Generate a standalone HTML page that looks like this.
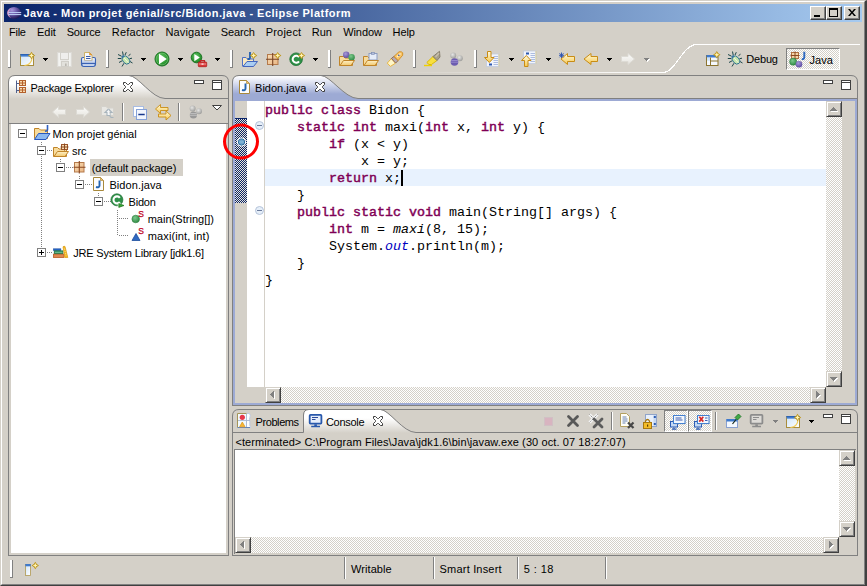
<!DOCTYPE html><html><head><meta charset='utf-8'><title>Java - Mon projet génial/src/Bidon.java - Eclipse Platform</title><style>
*{box-sizing:border-box;margin:0;padding:0}
html,body{width:867px;height:586px;overflow:hidden;background:#d4d0c8}
body{position:relative;font-family:"Liberation Sans",sans-serif;font-size:11px;color:#000;line-height:13px}
.a{position:absolute}
.t{position:absolute;white-space:pre;height:13px;line-height:13px}
.code{position:absolute;white-space:pre;font-family:"Liberation Mono",monospace;font-size:13.33px;line-height:17px;height:17px;left:265px;color:#000}
.k{color:#7f0055;-webkit-text-stroke:0.45px #7f0055}
.f{color:#0000c0;font-style:italic}
.i{font-style:italic}
.chk{background-image:conic-gradient(#fff 25%,#d4d0c8 0 50%,#fff 0 75%,#d4d0c8 0);background-size:2px 2px}
.btn{position:absolute;background:#d4d0c8;border:1px solid;border-color:#fff #404040 #404040 #fff;box-shadow:inset -1px -1px 0 #808080}
.sb{position:absolute;width:16px;height:16px;background:#d4d0c8;border:1px solid;border-color:#d4d0c8 #404040 #404040 #d4d0c8;box-shadow:inset 1px 1px 0 #fff,inset -1px -1px 0 #808080}
.sep{position:absolute;width:2px;border-left:1px solid #808080;border-right:1px solid #fff}
.hnd{position:absolute;width:3px;border-left:1px solid #fff;border-right:1px solid #808080}
.dd{position:absolute;width:0;height:0;border-left:2.5px solid transparent;border-right:2.5px solid transparent;border-top:3px solid #000}
svg{position:absolute;overflow:visible}
</style></head><body>
<div class='a' style='left:0px;top:0px;width:867px;height:586px;border-top:1px solid #d4d0c8;border-left:1px solid #d4d0c8;border-right:2px solid #404040;border-bottom:1px solid #404040'></div>
<div class='a' style='left:1px;top:1px;width:864px;height:584px;border-top:1px solid #fff;border-left:1px solid #fff;border-right:1px solid #808080;border-bottom:1px solid #808080'></div>
<div class='a' style='left:4px;top:4px;width:858px;height:18px;background:linear-gradient(90deg,#0a246a,#a6caf0)'></div>
<svg style="left:6px;top:5px" width="16" height="16" viewBox="0 0 16 16"><defs><radialGradient id="eg" cx="0.35" cy="0.25" r="0.8"><stop offset="0" stop-color="#a898dc"/><stop offset="0.45" stop-color="#6858a8"/><stop offset="1" stop-color="#1c1450"/></radialGradient></defs><ellipse cx="8" cy="8" rx="7" ry="6" fill="url(#eg)"/><clipPath id="ec"><ellipse cx="8" cy="8" rx="7" ry="6"/></clipPath><path d="M5 2.600 Q-3 8 5 13.400 Q0.800 8 5 2.600 Z" fill="#eaa4c6" opacity="0.800" clip-path="url(#ec)"/><rect x="2.200" y="7" width="13" height="1.100" fill="#b8c8f2"/><rect x="2.200" y="9" width="13" height="1.100" fill="#b8c8f2"/></svg>
<div class='t' style='left:23.4px;top:7px;font-weight:bold;letter-spacing:0.485px;color:#fff'>Java - Mon projet génial/src/Bidon.java - Eclipse Platform</div>
<div class='btn' style='left:810px;top:6px;width:16px;height:14px'></div>
<div class='btn' style='left:826px;top:6px;width:16px;height:14px'></div>
<div class='btn' style='left:844px;top:6px;width:16px;height:14px'></div>
<div class='a' style='left:814px;top:15px;width:6px;height:2px;background:#000'></div>
<div class='a' style='left:829px;top:8px;width:9px;height:9px;border:1px solid #000;border-top-width:2px'></div>
<svg style="left:848px;top:9px" width="8" height="7" viewBox="0 0 8 7"><path d="M0 0h2l2 2.5L6 0h2L5 3.5 8 7H6L4 4.5 2 7H0l3-3.5z" fill="#000"/></svg>
<div class='t' style='left:9.0px;top:26px;letter-spacing:-0.245px;'>File</div>
<div class='t' style='left:37.0px;top:26px;letter-spacing:-0.023px;'>Edit</div>
<div class='t' style='left:66.7px;top:26px;letter-spacing:-0.192px;'>Source</div>
<div class='t' style='left:111.8px;top:26px;letter-spacing:0.175px;'>Refactor</div>
<div class='t' style='left:165.4px;top:26px;letter-spacing:0.168px;'>Navigate</div>
<div class='t' style='left:220.8px;top:26px;letter-spacing:-0.132px;'>Search</div>
<div class='t' style='left:265.7px;top:26px;letter-spacing:0.208px;'>Project</div>
<div class='t' style='left:311.7px;top:26px;letter-spacing:0.006px;'>Run</div>
<div class='t' style='left:343.2px;top:26px;letter-spacing:-0.085px;'>Window</div>
<div class='t' style='left:392.6px;top:26px;letter-spacing:-0.108px;'>Help</div>
<svg width="0" height="0" style="position:absolute"><defs>
<linearGradient id="gwin" x1="0" y1="0" x2="1" y2="1"><stop offset="0" stop-color="#cfe4f8"/><stop offset="1" stop-color="#ffffff"/></linearGradient>
<linearGradient id="gprn" x1="0" y1="0" x2="0" y2="1"><stop offset="0" stop-color="#f0f4fc"/><stop offset="1" stop-color="#9fb6e0"/></linearGradient>
<radialGradient id="grun" cx="0.45" cy="0.4" r="0.6"><stop offset="0" stop-color="#6cc86c"/><stop offset="0.7" stop-color="#2f9a34"/><stop offset="1" stop-color="#1f7a28"/></radialGradient>
<linearGradient id="gfold" x1="0" y1="0" x2="0" y2="1"><stop offset="0" stop-color="#fdf0c8"/><stop offset="1" stop-color="#f2c86c"/></linearGradient>
<linearGradient id="garr" x1="0" y1="0" x2="0" y2="1"><stop offset="0" stop-color="#fffbe0"/><stop offset="1" stop-color="#f6c850"/></linearGradient>
<linearGradient id="gdis" x1="0" y1="0" x2="0" y2="1"><stop offset="0" stop-color="#fbfbfa"/><stop offset="1" stop-color="#e6e4de"/></linearGradient>
<radialGradient id="gpur" cx="0.4" cy="0.35" r="0.7"><stop offset="0" stop-color="#a89ad8"/><stop offset="1" stop-color="#5a48a0"/></radialGradient>
<radialGradient id="ggrn" cx="0.4" cy="0.35" r="0.7"><stop offset="0" stop-color="#7cc88c"/><stop offset="1" stop-color="#2c8840"/></radialGradient>
<radialGradient id="ggry" cx="0.4" cy="0.35" r="0.7"><stop offset="0" stop-color="#e6e6e4"/><stop offset="1" stop-color="#9a9a98"/></radialGradient>
<linearGradient id="gpk" x1="0" y1="0" x2="1" y2="1"><stop offset="0" stop-color="#f8dcb4"/><stop offset="1" stop-color="#eab684"/></linearGradient>
</defs></svg>
<div class='a' style='left:8px;top:50px;width:3px;height:18px;background:#fff;border-right:1px solid #808080;border-bottom:1px solid #808080'></div>
<svg style='left:20px;top:51px' width='16' height='16' viewBox='0 0 16 16'><rect x="0.5" y="3.5" width="13" height="11" fill="url(#gwin)" stroke="#a98d3c"/><rect x="0.5" y="3" width="13" height="2.6" fill="#3f7acc"/><rect x="0.5" y="3" width="13" height="1" fill="#2c62b4"/><path d="M12 7 Q11.5 13.5 4.5 14.5" fill="none" stroke="#f2cc58" stroke-width="1.2"/><path d="M11.5 0.7999999999999998 L13.0 3.0 L15.2 4.5 L13.0 6.0 L11.5 8.2 L10.0 6.0 L7.8 4.5 L10.0 3.0 Z" fill="#bf971c"/><path d="M11.5 2.0 L12.25 3.75 L14.0 4.5 L12.25 5.25 L11.5 7.0 L10.75 5.25 L9.0 4.5 L10.75 3.75 Z" fill="#fff4b4"/></svg>
<div class='a' style='left:43px;top:58px;width:5px;height:1px;background:#000'></div>
<div class='a' style='left:44px;top:59px;width:3px;height:1px;background:#000'></div>
<div class='a' style='left:45px;top:60px;width:1px;height:1px;background:#000'></div>
<svg style='left:57px;top:51px' width='16' height='16' viewBox='0 0 16 16'><rect x="0.5" y="1.5" width="14" height="14" fill="#e9e8e5" stroke="#dcdad5"/><rect x="1.5" y="2" width="2" height="13" fill="#f3f3f1"/><rect x="11.5" y="2" width="2" height="13" fill="#f3f3f1"/><rect x="3.5" y="1.5" width="8" height="7" fill="#efeeec" stroke="#d3d1cb"/><rect x="4.5" y="10.5" width="7" height="5" fill="#e2e1dc" stroke="#d0cec8"/><rect x="8" y="12.5" width="1.6" height="2.5" fill="#b9b7b0"/></svg>
<svg style='left:81px;top:51px' width='16' height='16' viewBox='0 0 16 16'><path d="M2 6.500 Q0.500 6.500 0.500 8 V13 Q0.500 15.500 3 15.500 H12 Q14.500 15.500 14.500 13 V8 Q14.500 6.500 13 6.500 Z" fill="url(#gprn)" stroke="#3a62b4" stroke-width="1.100"/><path d="M1 12.500 H14" stroke="#3a62b4" stroke-width="1.300"/><path d="M2 14 H13" stroke="#e4ecfa" stroke-width="1"/><path d="M3.500 9.500 V1.500 H8.500 L11 4 V9.500 Z" fill="#f4f7fd" stroke="#c9aa58" stroke-width="0.900"/><path d="M8.500 1.500 V4 H11 Z" fill="#f0a030" stroke="#d89030" stroke-width="0.600"/><path d="M5 5.500 H9.500 M5 7.500 H9.500" stroke="#3c5ca8" stroke-width="1.100"/><path d="M3 9.800 H11.500" stroke="#b4c4e4" stroke-width="0.800"/></svg>
<div class='a' style='left:106px;top:50px;width:3px;height:18px;background:#fff;border-right:1px solid #808080;border-bottom:1px solid #808080'></div>
<svg style='left:117px;top:51px' width='16' height='16' viewBox='0 0 16 16'><g stroke="#1c4648" stroke-width="1" fill="none"><path d="M5.500 0.500 L6.200 4 M9.300 1.200 L8 4 M1 3.500 L4.500 5.200 M0.800 7.500 H4.300 M2 11.500 L5.300 9.700 M5 15.500 L7 12.200 M11.500 4.700 L13.500 3.200 M12.500 7.700 L15 7.200 M13 10.500 L15.500 12"/></g><g transform="rotate(-42 8.500 8.500)"><ellipse cx="8.500" cy="9.200" rx="3.200" ry="4.500" fill="#c6e4ae" stroke="#2a7090" stroke-width="0.900"/><path d="M8.500 5.500 V13" stroke="#ecf8e0" stroke-width="0.900"/><ellipse cx="8.500" cy="4.600" rx="1.700" ry="1.200" fill="#3a78a0"/></g></svg>
<div class='a' style='left:141px;top:58px;width:5px;height:1px;background:#000'></div>
<div class='a' style='left:142px;top:59px;width:3px;height:1px;background:#000'></div>
<div class='a' style='left:143px;top:60px;width:1px;height:1px;background:#000'></div>
<svg style='left:154px;top:51px' width='16' height='16' viewBox='0 0 16 16'><circle cx="8" cy="8" r="7" fill="url(#grun)" stroke="#1d7424" stroke-width="1"/><circle cx="8" cy="8" r="5.800" fill="none" stroke="#7ccc7c" stroke-width="0.800" opacity="0.700"/><path d="M5 2.800 L12.800 8 L5 13.200 Z" fill="#fff"/></svg>
<div class='a' style='left:178px;top:58px;width:5px;height:1px;background:#000'></div>
<div class='a' style='left:179px;top:59px;width:3px;height:1px;background:#000'></div>
<div class='a' style='left:180px;top:60px;width:1px;height:1px;background:#000'></div>
<svg style='left:191px;top:51px' width='16' height='16' viewBox='0 0 16 16'><circle cx="5.500" cy="6.500" r="5.300" fill="url(#grun)" stroke="#1d7424"/><path d="M3.300 3 L8.800 6.500 L3.300 10.300 Z" fill="#fff"/><path d="M9.500 11 V9.600 H13.500 V11" fill="none" stroke="#c02828" stroke-width="1.200"/><rect x="7.300" y="11" width="8.400" height="4.700" rx="0.800" fill="#d83838" stroke="#b02020" stroke-width="0.800"/><path d="M7.800 13 H15.200" stroke="#f4b0b0" stroke-width="0.800"/><rect x="10.500" y="12.300" width="2" height="1.600" fill="#f8d0d0"/></svg>
<div class='a' style='left:215px;top:58px;width:5px;height:1px;background:#000'></div>
<div class='a' style='left:216px;top:59px;width:3px;height:1px;background:#000'></div>
<div class='a' style='left:217px;top:60px;width:1px;height:1px;background:#000'></div>
<div class='a' style='left:230px;top:50px;width:3px;height:18px;background:#fff;border-right:1px solid #808080;border-bottom:1px solid #808080'></div>
<svg style='left:242px;top:51px' width='16' height='16' viewBox='0 0 16 16'><path d="M0.500 6.500 H4 L5.500 8 H11.500 V15 H0.500 Z" fill="#fbe9c0" stroke="#5070c4"/><path d="M1 15.500 L5 10.500 H15.500 L11.500 15.500 Z" fill="#a9cdf2" stroke="#4464bc"/><path d="M8 1 V6.500 Q8 8.500 5.500 8" fill="none" stroke="#1f5cb0" stroke-width="1.800"/><path d="M11.6 0.8999999999999995 L13.1 3.0999999999999996 L15.3 4.6 L13.1 6.1 L11.6 8.3 L10.1 6.1 L7.8999999999999995 4.6 L10.1 3.0999999999999996 Z" fill="#bf971c"/><path d="M11.6 2.0999999999999996 L12.35 3.8499999999999996 L14.1 4.6 L12.35 5.35 L11.6 7.1 L10.85 5.35 L9.1 4.6 L10.85 3.8499999999999996 Z" fill="#fff4b4"/></svg>
<svg style='left:266px;top:51px' width='16' height='16' viewBox='0 0 16 16'><rect x="1.500" y="3.500" width="10.500" height="10" fill="url(#gpk)" stroke="#b47a4c"/><path d="M6.700 2 V15 M0 8.300 H13" stroke="#7a4424" stroke-width="1.100"/><path d="M11.7 0.8999999999999995 L13.2 3.0999999999999996 L15.399999999999999 4.6 L13.2 6.1 L11.7 8.3 L10.2 6.1 L7.999999999999999 4.6 L10.2 3.0999999999999996 Z" fill="#bf971c"/><path d="M11.7 2.0999999999999996 L12.45 3.8499999999999996 L14.2 4.6 L12.45 5.35 L11.7 7.1 L10.95 5.35 L9.2 4.6 L10.95 3.8499999999999996 Z" fill="#fff4b4"/></svg>
<svg style='left:289px;top:51px' width='16' height='16' viewBox='0 0 16 16'><circle cx="7.100" cy="8.200" r="6.300" fill="#2e9048" stroke="#1e7034" stroke-width="0.800"/><path d="M10 6.200 A3.500 3.500 0 1 0 10 10.300" fill="none" stroke="#fff" stroke-width="2"/><path d="M12.5 0.8999999999999995 L14.0 3.0999999999999996 L16.2 4.6 L14.0 6.1 L12.5 8.3 L11.0 6.1 L8.8 4.6 L11.0 3.0999999999999996 Z" fill="#bf971c"/><path d="M12.5 2.0999999999999996 L13.25 3.8499999999999996 L15.0 4.6 L13.25 5.35 L12.5 7.1 L11.75 5.35 L10.0 4.6 L11.75 3.8499999999999996 Z" fill="#fff4b4"/></svg>
<div class='a' style='left:313px;top:58px;width:5px;height:1px;background:#000'></div>
<div class='a' style='left:314px;top:59px;width:3px;height:1px;background:#000'></div>
<div class='a' style='left:315px;top:60px;width:1px;height:1px;background:#000'></div>
<div class='a' style='left:328px;top:50px;width:3px;height:18px;background:#fff;border-right:1px solid #808080;border-bottom:1px solid #808080'></div>
<svg style='left:339px;top:51px' width='16' height='16' viewBox='0 0 16 16'><path d="M0.500 5.500 H4.500 L6 7 H13.500 V14.500 H0.500 Z" fill="#f8dc9c" stroke="#c08428"/><circle cx="7.200" cy="3.800" r="3.200" fill="url(#gpur)"/><circle cx="12.600" cy="6.200" r="3.200" fill="url(#ggrn)"/><path d="M1 14.500 L4.500 9.500 H15.500 L12 14.500 Z" fill="url(#gfold)" stroke="#c08428"/></svg>
<svg style='left:363px;top:51px' width='16' height='16' viewBox='0 0 16 16'><path d="M0.500 5.500 H4.500 L6 7 H13.500 V14.500 H0.500 Z" fill="#f8dc9c" stroke="#c08428"/><rect x="6" y="2.500" width="8" height="6.500" fill="#e6ecf8" stroke="#8c9cc0"/><rect x="8.500" y="1.300" width="3" height="2" fill="#b4c0dc" stroke="#7888b0" stroke-width="0.600"/><path d="M1 14.500 L4.500 9.500 H15.500 L12 14.500 Z" fill="url(#gfold)" stroke="#c08428"/></svg>
<svg style='left:387px;top:51px' width='16' height='16' viewBox='0 0 16 16'><path d="M0.300 12.100 L3.400 15.400 L8.600 12.100 L4.400 7.500 Z" fill="#fff6c8" stroke="#e8b030" stroke-width="0.900"/><path d="M4.400 7.500 L8.600 12.100 L11.200 9.500 L7 5.400 Z" fill="#b4aab4" stroke="#8a6040" stroke-width="0.900"/><path d="M7 5.400 L11.200 9.500 L15.700 4.200 L15.700 1.800 L14.300 0.800 L12 0.800 Z" fill="#f8c468" stroke="#d08c20" stroke-width="0.900"/><path d="M10 6 L13.500 2.500" stroke="#fff0c8" stroke-width="1.300"/><circle cx="11.800" cy="4.200" r="0.750" fill="#2040a0"/></svg>
<div class='a' style='left:413px;top:50px;width:3px;height:18px;background:#fff;border-right:1px solid #808080;border-bottom:1px solid #808080'></div>
<svg style='left:424px;top:51px' width='16' height='16' viewBox='0 0 16 16'><path d="M0 14.500 H8" stroke="#f0d000" stroke-width="1.400"/><path d="M5 13.500 L2.800 11.500 L9 5.500 L13 9.500 L7.500 13.500 Z" fill="#f8e040" stroke="#d8b400" stroke-width="0.900"/><path d="M9 5.500 L15.500 0.300 L16 6 L13 9.500 Z" fill="#a8a08c" stroke="#807868" stroke-width="0.900"/><path d="M11.500 6 L15 2" stroke="#c8c0ac" stroke-width="1.300"/></svg>
<svg style='left:448px;top:51px' width='16' height='16' viewBox='0 0 16 16'><circle cx="5.200" cy="4.500" r="3" fill="url(#ggry)"/><circle cx="11.800" cy="7.200" r="3" fill="url(#ggry)"/><circle cx="6.500" cy="11" r="3.800" fill="#6c5cb0"/><path d="M3.200 9.500 H9.800 M2.800 11.200 H10.200" stroke="#9a8cd0" stroke-width="0.900"/></svg>
<div class='a' style='left:474px;top:50px;width:3px;height:18px;background:#fff;border-right:1px solid #808080;border-bottom:1px solid #808080'></div>
<svg style='left:484px;top:51px' width='16' height='16' viewBox='0 0 16 16'><rect x="2.5" y="3" width="12.500" height="12.500" fill="#f2f5fc" stroke="#c0cadf" stroke-width="0.800"/><path d="M15.0 3 V15.5" stroke="#dccf98" stroke-width="1"/><path d="M9.5 5.5 h4.500 M9.5 7.5 h4.500 M9.5 9.5 h4.500 M9.5 11.5 h4.500 M9.5 13.5 h4.500" stroke="#a4b6dc" stroke-width="0.900"/><rect x="5.0" y="12.5" width="3" height="2" fill="#2c58b0"/><path d="M3.500 0.500 H7 V6.500 H10 L5.300 11.500 L0.500 6.500 H3.500 Z" fill="url(#garr)" stroke="#c88c14"/></svg>
<div class='a' style='left:509px;top:58px;width:5px;height:1px;background:#000'></div>
<div class='a' style='left:510px;top:59px;width:3px;height:1px;background:#000'></div>
<div class='a' style='left:511px;top:60px;width:1px;height:1px;background:#000'></div>
<svg style='left:521px;top:51px' width='16' height='16' viewBox='0 0 16 16'><rect x="2.5" y="0" width="12.500" height="12.500" fill="#f2f5fc" stroke="#c0cadf" stroke-width="0.800"/><path d="M15.0 0 V12.5" stroke="#dccf98" stroke-width="1"/><path d="M9.5 2.5 h4.500 M9.5 4.5 h4.500 M9.5 6.5 h4.500 M9.5 8.5 h4.500 M9.5 10.5 h4.500" stroke="#a4b6dc" stroke-width="0.900"/><rect x="5.0" y="1.5" width="3" height="2" fill="#2c58b0"/><path d="M3.500 15.500 H7 V9.500 H10 L5.300 4.500 L0.500 9.500 H3.500 Z" fill="url(#garr)" stroke="#c88c14"/></svg>
<div class='a' style='left:546px;top:58px;width:5px;height:1px;background:#000'></div>
<div class='a' style='left:547px;top:59px;width:3px;height:1px;background:#000'></div>
<div class='a' style='left:548px;top:60px;width:1px;height:1px;background:#000'></div>
<svg style='left:559px;top:51px' width='16' height='16' viewBox='0 0 16 16'><path d="M15.500 5.500 H8.500 V2.500 L2 8 L8.500 13.500 V10.500 H15.500 Z" fill="url(#garr)" stroke="#c88c14"/><path d="M0.500 2.300 L4.500 6.300 M4.500 2.300 L0.500 6.300 M2.500 1.500 V7 M0 4.300 H5" stroke="#2850b0" stroke-width="0.900"/></svg>
<svg style='left:583px;top:51px' width='16' height='16' viewBox='0 0 16 16'><path d="M14.500 5.500 H8 V2.500 L1 8 L8 13.500 V10.500 H14.500 Z" fill="url(#garr)" stroke="#c88c14"/></svg>
<div class='a' style='left:607px;top:58px;width:5px;height:1px;background:#000'></div>
<div class='a' style='left:608px;top:59px;width:3px;height:1px;background:#000'></div>
<div class='a' style='left:609px;top:60px;width:1px;height:1px;background:#000'></div>
<svg style='left:620px;top:51px' width='16' height='16' viewBox='0 0 16 16'><path d="M1.500 5.500 H8 V2.500 L14.500 8 L8 13.500 V10.500 H1.500 Z" fill="url(#gdis)" stroke="#dddbd5"/></svg>
<div class='a' style='left:645px;top:59px;width:5px;height:1px;background:#fff'></div>
<div class='a' style='left:646px;top:60px;width:3px;height:1px;background:#fff'></div>
<div class='a' style='left:647px;top:61px;width:1px;height:1px;background:#fff'></div>
<div class='a' style='left:644px;top:58px;width:5px;height:1px;background:#808080'></div>
<div class='a' style='left:645px;top:59px;width:3px;height:1px;background:#808080'></div>
<div class='a' style='left:646px;top:60px;width:1px;height:1px;background:#808080'></div>
<svg style="left:0;top:0" width="867" height="90" viewBox="0 0 867 90"><defs><linearGradient id="pg" x1="400" x2="660" y1="0" y2="0" gradientUnits="userSpaceOnUse"><stop offset="0" stop-color="#fff" stop-opacity="0"/><stop offset="1" stop-color="#fff"/></linearGradient></defs>
<rect x="400" y="72" width="263" height="1" fill="url(#pg)"/>
<path d="M663 72.5 C676 72.5 682 44.5 697 44.5 L860 44.5" fill="none" stroke="#fff" stroke-width="1.15" shape-rendering="crispEdges"/></svg>
<svg style='left:705px;top:51px' width='16' height='16' viewBox='0 0 16 16'><rect x="1.500" y="4.500" width="11.500" height="10" fill="#f4f8fe" stroke="#8c7430"/><rect x="1.500" y="4" width="11.500" height="2.500" fill="#3f7acc"/><path d="M5.500 6.500 V14.500 M5.500 10 H13" stroke="#8c7430"/><rect x="2" y="6.700" width="3" height="3" fill="#cfe4f8"/><path d="M11.8 0.09999999999999964 L13.3 2.3 L15.5 3.8 L13.3 5.3 L11.8 7.5 L10.3 5.3 L8.100000000000001 3.8 L10.3 2.3 Z" fill="#bf971c"/><path d="M11.8 1.2999999999999998 L12.55 3.05 L14.3 3.8 L12.55 4.55 L11.8 6.3 L11.05 4.55 L9.3 3.8 L11.05 3.05 Z" fill="#fff4b4"/></svg>
<svg style='left:727px;top:51px' width='16' height='16' viewBox='0 0 16 16'><g stroke="#1c4648" stroke-width="1" fill="none"><path d="M5.500 0.500 L6.200 4 M9.300 1.200 L8 4 M1 3.500 L4.500 5.200 M0.800 7.500 H4.300 M2 11.500 L5.300 9.700 M5 15.500 L7 12.200 M11.500 4.700 L13.500 3.200 M12.500 7.700 L15 7.200 M13 10.500 L15.500 12"/></g><g transform="rotate(-42 8.500 8.500)"><ellipse cx="8.500" cy="9.200" rx="3.200" ry="4.500" fill="#c6e4ae" stroke="#2a7090" stroke-width="0.900"/><path d="M8.500 5.500 V13" stroke="#ecf8e0" stroke-width="0.900"/><ellipse cx="8.500" cy="4.600" rx="1.700" ry="1.200" fill="#3a78a0"/></g></svg>
<div class='t' style='left:746.2px;top:53px;letter-spacing:-0.155px;'>Debug</div>
<div class='a' style='left:786px;top:48px;width:54px;height:22px;border:1px solid;border-color:#808080 #fff #fff #808080'></div>
<div class='a chk' style='left:787px;top:49px;width:52px;height:20px'></div>
<svg style='left:789px;top:51px' width='16' height='16' viewBox='0 0 16 16'><rect x="2.500" y="1.500" width="7" height="6" fill="#f4d4a8" stroke="#b07040"/><path d="M6 0.500 V8.500 M1.500 4.500 H10.500" stroke="#8a4820" stroke-width="1"/><path d="M15.300 0.800 V6 Q15.300 8.500 12.800 8" fill="none" stroke="#2c68c0" stroke-width="1.900"/><circle cx="4.200" cy="10.700" r="3.600" fill="url(#ggrn)" stroke="#2c7c3c" stroke-width="0.500"/><circle cx="10" cy="13.200" r="3.300" fill="url(#gpur)"/></svg>
<div class='t' style='left:809.4px;top:54px;letter-spacing:0.117px;'>Java</div>
<svg style="left:0;top:0" width="867" height="586" viewBox="0 0 867 586">
<defs><linearGradient id="tabw" x1="0" x2="0" y1="76" y2="99" gradientUnits="userSpaceOnUse"><stop offset="0" stop-color="#fff"/><stop offset="0.35" stop-color="#fff"/><stop offset="1" stop-color="#d4d0c8"/></linearGradient>
<linearGradient id="tabb" x1="0" x2="0" y1="76" y2="99" gradientUnits="userSpaceOnUse"><stop offset="0" stop-color="#fff"/><stop offset="0.08" stop-color="#f6f7fc"/><stop offset="0.78" stop-color="#9daad4"/><stop offset="1" stop-color="#9daad4"/></linearGradient>
<linearGradient id="tabc" x1="0" x2="0" y1="410" y2="433" gradientUnits="userSpaceOnUse"><stop offset="0" stop-color="#fff"/><stop offset="0.35" stop-color="#fff"/><stop offset="1" stop-color="#d4d0c8"/></linearGradient></defs>
<!-- package explorer -->
<path d="M9 99 V81 Q9 76 14 76 H129 C138 76 152 98.5 165 98.5 V99 Z" fill="url(#tabw)"/>
<path d="M8.5 556 V82 Q8.5 75.5 15 75.5 H222 Q228.5 75.5 228.5 82 V556" fill="none" stroke="#808080"/>
<path d="M129 75.5 C138 75.5 152 98.5 165 98.5 H228" fill="none" stroke="#808080"/>
<!-- editor -->
<path d="M233 99 V81 Q233 76 238 76 H321 C330 76 345 98.5 358 98.5 V99 Z" fill="url(#tabb)"/>
<path d="M232.5 100 V82 Q232.5 75.5 239 75.5 H851 Q857.5 75.5 857.5 82 V100" fill="none" stroke="#808080"/>
<path d="M321 75.5 C330 75.5 345 98.5 358 98.5 H857" fill="none" stroke="#808080"/>
<!-- console -->
<path d="M304 433 V415 Q304 410 309 410 H380.500 C389 410 403 432.5 416 432.5 V433 Z" fill="url(#tabc)"/>
<path d="M232.5 556 V416 Q232.5 409.5 239 409.5 H851 Q857.5 409.5 857.5 416 V556" fill="none" stroke="#808080"/>
<path d="M233 432.5 H303.5 V415 Q303.5 409.5 309 409.5 H380.500 C389 409.5 403 432.5 416 432.5 H857" fill="none" stroke="#808080"/>
</svg>
<div class='a' style='left:8px;top:555px;width:221px;height:1px;background:#808080'></div>
<div class='a' style='left:232px;top:555px;width:626px;height:1px;background:#808080'></div>
<svg style='left:13px;top:79px' width='16' height='16' viewBox='0 0 16 16'><path d="M3.500 1.500 V14 M3.500 4.500 H6 M3.500 11.500 H6" stroke="#50608c" fill="none"/><rect x="6.500" y="1.500" width="6" height="5" fill="#f8dcb0" stroke="#b4602c"/><path d="M9.500 1.500 V6.500 M6.500 4 H12.500" stroke="#b4602c"/><rect x="6.500" y="8.500" width="6" height="5" fill="#f8dcb0" stroke="#b4602c"/><path d="M9.500 8.500 V13.500 M6.500 11 H12.500" stroke="#b4602c"/></svg>
<div class='t' style='left:30.4px;top:82px;letter-spacing:-0.222px;'>Package Explorer</div>
<svg style='left:123px;top:82px' width='10' height='10' viewBox='0 0 10 10'><polygon points='0.5,0.5 2.5,0.5 4.5,2.5 5.5,2.5 7.5,0.5 9.5,0.5 9.5,2.5 7.5,4.5 7.5,5.5 9.5,7.5 9.5,9.5 7.5,9.5 5.5,7.5 4.5,7.5 2.5,9.5 0.5,9.5 0.5,7.5 2.5,5.5 2.5,4.5 0.5,2.5' fill='#fff' stroke='#3c3c3c' stroke-width='1'/></svg>
<div class='a' style='left:194px;top:80px;width:10px;height:4px;border:1px solid #404040;background:#fff'></div>
<div class='a' style='left:212px;top:80px;width:10px;height:10px;border:1px solid #404040;background:#fff'></div>
<div class='a' style='left:213px;top:82px;width:8px;height:1px;background:#404040'></div>
<svg style='left:51px;top:104px' width='16' height='16' viewBox='0 0 16 16'><path d="M14.500 5.500 H7.500 V2.500 L1.500 8 L7.500 13.500 V10.500 H14.500 Z" fill="url(#gdis)" stroke="#dcdad4"/></svg>
<svg style='left:75px;top:104px' width='16' height='16' viewBox='0 0 16 16'><path d="M1.500 5.500 H8.500 V2.500 L14.500 8 L8.500 13.500 V10.500 H1.500 Z" fill="url(#gdis)" stroke="#dcdad4"/></svg>
<svg style='left:99px;top:104px' width='16' height='16' viewBox='0 0 16 16'><path d="M2.500 2.500 H7 L8.500 4 H14.500 V11.500 H2.500 Z" fill="#e8e7e3" stroke="#d4d2cc"/><path d="M9.500 5 L13 8.500 H11 V12 Q11 13.500 13.500 13.500 H14.500" fill="none" stroke="#a8b4bc" stroke-width="1.100"/><path d="M9.500 5 L6 8.500 H8 V11.500 H11" fill="#f4f6f8" stroke="#a8b4bc" stroke-width="1.100"/></svg>
<div class='a' style='left:122px;top:103px;width:2px;height:18px;border-left:1px solid #808080;border-right:1px solid #fff'></div>
<svg style='left:132px;top:104px' width='16' height='16' viewBox='0 0 16 16'><rect x="1.500" y="2.500" width="10" height="10" fill="#fff" stroke="#a8bce2"/><rect x="4.500" y="5.500" width="10" height="10" fill="#f2f6fd" stroke="#86a2d8"/><path d="M6.300 10.500 H12.700" stroke="#18388c" stroke-width="1.500"/></svg>
<svg style='left:155px;top:104px' width='16' height='16' viewBox='0 0 16 16'><path d="M0.500 5 L5.500 0.500 V3.500 H13 V6.500 H5.500 V9.500 Z" fill="url(#garr)" stroke="#c88c14" stroke-width="0.900"/><path d="M16 11.500 L11 7 V10 H3.500 V13 H11 V16 Z" fill="url(#garr)" stroke="#c88c14" stroke-width="0.900"/></svg>
<div class='a' style='left:178px;top:103px;width:2px;height:18px;border-left:1px solid #808080;border-right:1px solid #fff'></div>
<svg style='left:188px;top:104px' width='16' height='16' viewBox='0 0 16 16'><circle cx="4.600" cy="4.600" r="3" fill="url(#ggry)"/><circle cx="11" cy="7.200" r="3" fill="url(#ggry)"/><circle cx="5.400" cy="11" r="3.600" fill="#989898"/><path d="M2.200 9.600 H8.600 M1.900 11.300 H8.900" stroke="#c4c4c4" stroke-width="0.900"/></svg>
<svg style="left:212px;top:105px" width="10" height="6" viewBox="0 0 10 6"><path d="M0.5 0.5 H9.5 L5 5 Z" fill="#fff" stroke="#404040"/></svg>
<div class='a' style='left:9px;top:123px;width:219px;height:1px;background:#808080'></div>
<div class='a' style='left:11px;top:124px;width:215px;height:429px;background:#fff'></div>
<div class='a' style='left:41px;top:142px;width:1px;height:107px;background-image:linear-gradient(#808080 50%,transparent 0);background-size:1px 2px'></div>
<div class='a' style='left:60px;top:159px;width:1px;height:4px;background-image:linear-gradient(#808080 50%,transparent 0);background-size:1px 2px'></div>
<div class='a' style='left:79px;top:176px;width:1px;height:4px;background-image:linear-gradient(#808080 50%,transparent 0);background-size:1px 2px'></div>
<div class='a' style='left:98px;top:193px;width:1px;height:4px;background-image:linear-gradient(#808080 50%,transparent 0);background-size:1px 2px'></div>
<div class='a' style='left:117px;top:210px;width:1px;height:26px;background-image:linear-gradient(#808080 50%,transparent 0);background-size:1px 2px'></div>
<div class='a' style='left:47px;top:150px;width:6px;height:1px;background-image:linear-gradient(90deg,#808080 50%,transparent 0);background-size:2px 1px'></div>
<div class='a' style='left:66px;top:167px;width:7px;height:1px;background-image:linear-gradient(90deg,#808080 50%,transparent 0);background-size:2px 1px'></div>
<div class='a' style='left:85px;top:184px;width:7px;height:1px;background-image:linear-gradient(90deg,#808080 50%,transparent 0);background-size:2px 1px'></div>
<div class='a' style='left:104px;top:201px;width:7px;height:1px;background-image:linear-gradient(90deg,#808080 50%,transparent 0);background-size:2px 1px'></div>
<div class='a' style='left:119px;top:218px;width:10px;height:1px;background-image:linear-gradient(90deg,#808080 50%,transparent 0);background-size:2px 1px'></div>
<div class='a' style='left:119px;top:235px;width:10px;height:1px;background-image:linear-gradient(90deg,#808080 50%,transparent 0);background-size:2px 1px'></div>
<div class='a' style='left:47px;top:252px;width:6px;height:1px;background-image:linear-gradient(90deg,#808080 50%,transparent 0);background-size:2px 1px'></div>
<div class='a' style='left:18px;top:129px;width:9px;height:9px;border:1px solid #808080;background:#fff'></div>
<div class='a' style='left:20px;top:133px;width:5px;height:1px;background:#000'></div>
<div class='a' style='left:37px;top:146px;width:9px;height:9px;border:1px solid #808080;background:#fff'></div>
<div class='a' style='left:39px;top:150px;width:5px;height:1px;background:#000'></div>
<div class='a' style='left:56px;top:163px;width:9px;height:9px;border:1px solid #808080;background:#fff'></div>
<div class='a' style='left:58px;top:167px;width:5px;height:1px;background:#000'></div>
<div class='a' style='left:75px;top:180px;width:9px;height:9px;border:1px solid #808080;background:#fff'></div>
<div class='a' style='left:77px;top:184px;width:5px;height:1px;background:#000'></div>
<div class='a' style='left:94px;top:197px;width:9px;height:9px;border:1px solid #808080;background:#fff'></div>
<div class='a' style='left:96px;top:201px;width:5px;height:1px;background:#000'></div>
<div class='a' style='left:37px;top:248px;width:9px;height:9px;border:1px solid #808080;background:#fff'></div>
<div class='a' style='left:39px;top:252px;width:5px;height:1px;background:#000'></div>
<div class='a' style='left:41px;top:250px;width:1px;height:5px;background:#000'></div>
<svg style='left:34px;top:125px' width='16' height='16' viewBox='0 0 16 16'><path d="M0.500 3.500 H5 L6.500 5 H13.500 V13.500 H0.500 Z" fill="#f8dc9c" stroke="#c08428"/><path d="M0.500 14.500 L4.500 8.500 H16 L12 14.500 Z" fill="#8cb8f0" stroke="#2858c0"/><path d="M13.500 0 V4.500 Q13.500 6.500 11 6" fill="none" stroke="#3060c0" stroke-width="1.600"/></svg>
<div class='t' style='left:52.4px;top:128px;letter-spacing:-0.006px;'>Mon projet génial</div>
<svg style='left:53px;top:142px' width='16' height='16' viewBox='0 0 16 16'><path d="M0.500 5.500 H4.500 L6 7 H13.500 V14.500 H0.500 Z" fill="#f8dc9c" stroke="#c08428"/><rect x="8.500" y="2.500" width="6" height="5" fill="#f8dcb0" stroke="#9c5428"/><path d="M11.500 1.500 V8.500 M7.500 5 H15.500" stroke="#8a4820"/><path d="M1 14.500 L4.500 9.500 H15.500 L12 14.500 Z" fill="url(#gfold)" stroke="#c08428"/></svg>
<div class='t' style='left:72.1px;top:145px;letter-spacing:-0.086px;'>src</div>
<svg style='left:73px;top:159px' width='16' height='16' viewBox='0 0 16 16'><rect x="1.500" y="3.500" width="9.500" height="9.500" fill="url(#gpk)" stroke="#b47a4c"/><path d="M6.300 2 V14.500 M0.500 8.300 H12.500" stroke="#8a4820" stroke-width="1.100"/></svg>
<div class='a' style='left:90px;top:159px;width:93px;height:17px;background:#d4d0c8'></div>
<div class='t' style='left:91.7px;top:162px;letter-spacing:-0.019px;'>(default package)</div>
<svg style='left:92px;top:176px' width='16' height='16' viewBox='0 0 16 16'><path d="M1.500 1.500 H8.500 L11.500 4.500 V14.500 H1.500 Z" fill="#fcfdff" stroke="#a8893c"/><path d="M8.500 1.500 V4.500 H11.500 Z" fill="#e8c070" stroke="#b89040" stroke-width="0.700"/><path d="M7.500 4.500 V9.500 Q7.500 12 4 11" fill="none" stroke="#2464b0" stroke-width="1.900"/></svg>
<div class='t' style='left:109.4px;top:179px;letter-spacing:0.092px;'>Bidon.java</div>
<svg style='left:111px;top:193px' width='16' height='16' viewBox='0 0 16 16'><circle cx="5.900" cy="6.800" r="6" fill="#2e9048" stroke="#1e7034" stroke-width="0.700"/><path d="M8.800 4.800 A3.500 3.500 0 1 0 8.800 9" fill="none" stroke="#fff" stroke-width="2.100"/><path d="M6.800 9.300 L14.500 12.500 L6.800 15.500 Z" fill="#fff"/><path d="M7.800 10.600 L13 12.500 L7.800 14.400 Z" fill="#38a838" stroke="#187018" stroke-width="0.700"/></svg>
<div class='t' style='left:128.6px;top:196px;letter-spacing:-0.210px;'>Bidon</div>
<svg style='left:130px;top:210px' width='16' height='16' viewBox='0 0 16 16'><circle cx="5.700" cy="9" r="3.800" fill="url(#ggrn)" stroke="#2c7c3c" stroke-width="0.600"/><text x="8.200" y="6.800" font-family="Liberation Sans,sans-serif" font-size="8.500" fill="#c00020" stroke="#c00020" stroke-width="0.250">S</text></svg>
<div class='t' style='left:147.7px;top:213px;letter-spacing:0.021px;'>main(String[])</div>
<svg style='left:130px;top:227px' width='16' height='16' viewBox='0 0 16 16'><path d="M6 6.500 L10 13.500 H2 Z" fill="#3068c0" stroke="#1c4c9c" stroke-width="0.800"/><text x="8.200" y="6.800" font-family="Liberation Sans,sans-serif" font-size="8.500" fill="#c00020" stroke="#c00020" stroke-width="0.250">S</text></svg>
<div class='t' style='left:147.7px;top:230px;letter-spacing:0.138px;'>maxi(int, int)</div>
<svg style='left:53px;top:244px' width='16' height='16' viewBox='0 0 16 16'><rect x="0.300" y="4.800" width="7.600" height="1.800" fill="#2464c4" stroke="#1c4ca0" stroke-width="0.500"/><rect x="1.200" y="6.800" width="8.800" height="3.200" fill="#2c8c5c" stroke="#1c6c40" stroke-width="0.600"/><path d="M2 8.300 H9.500" stroke="#7cc8a0" stroke-width="0.900"/><rect x="0.400" y="10.200" width="10.600" height="3.300" fill="#e08850" stroke="#b85c24" stroke-width="0.800"/><path d="M10 2.800 Q11 1.800 12 2.500 L14.800 13.500 H11.800 Z" fill="#f4b820" stroke="#d89810" stroke-width="0.700"/><path d="M11.300 4.500 L13.200 12" stroke="#fce080" stroke-width="1" stroke-dasharray="1.200 1.200"/></svg>
<div class='t' style='left:73.2px;top:247px;letter-spacing:-0.185px;'>JRE System Library [jdk1.6]</div>
<svg style='left:238px;top:79px' width='16' height='16' viewBox='0 0 16 16'><path d="M1.500 1.500 H8.500 L11.500 4.500 V14.500 H1.500 Z" fill="#fcfdff" stroke="#a8893c"/><path d="M8.500 1.500 V4.500 H11.500 Z" fill="#e8c070" stroke="#b89040" stroke-width="0.700"/><path d="M7.500 4.500 V9.500 Q7.500 12 4 11" fill="none" stroke="#2464b0" stroke-width="1.900"/></svg>
<div class='t' style='left:255.1px;top:82px;letter-spacing:-0.008px;'>Bidon.java</div>
<svg style='left:315px;top:82px' width='10' height='10' viewBox='0 0 10 10'><polygon points='0.5,0.5 2.5,0.5 4.5,2.5 5.5,2.5 7.5,0.5 9.5,0.5 9.5,2.5 7.5,4.5 7.5,5.5 9.5,7.5 9.5,9.5 7.5,9.5 5.5,7.5 4.5,7.5 2.5,9.5 0.5,9.5 0.5,7.5 2.5,5.5 2.5,4.5 0.5,2.5' fill='#fff' stroke='#3c3c3c' stroke-width='1'/></svg>
<div class='a' style='left:823px;top:80px;width:10px;height:4px;border:1px solid #404040;background:#fff'></div>
<div class='a' style='left:841px;top:80px;width:10px;height:10px;border:1px solid #404040;background:#fff'></div>
<div class='a' style='left:842px;top:82px;width:8px;height:1px;background:#404040'></div>
<div class='a' style='left:232px;top:99px;width:626px;height:307px;background:#9daad4;border:1px solid #808080;border-top:0'></div>
<div class='a' style='left:235px;top:101px;width:620px;height:302px;background:#d4d0c8'></div>
<div class='a' style='left:247px;top:101px;width:579px;height:286px;background:#fff'></div>
<div class='a' style='left:264px;top:101px;width:1px;height:286px;background:#d4d0c8'></div>
<div class='a' style='left:235px;top:118px;width:12px;height:85px;background-image:conic-gradient(#0a246a 25%,#ebe7d8 0 50%,#0a246a 0 75%,#ebe7d8 0);background-size:2px 2px;border-top:1px solid #0a246a'></div>
<div class='a' style='left:265px;top:169px;width:561px;height:17px;background:#e8f2fe'></div>
<div class='code' style='top:102px'><span class='k'>public</span> <span class='k'>class</span> Bidon {</div>
<div class='code' style='top:119px'>    <span class='k'>static</span> <span class='k'>int</span> maxi(<span class='k'>int</span> x, <span class='k'>int</span> y) {</div>
<div class='code' style='top:136px'>        <span class='k'>if</span> (x &lt; y)</div>
<div class='code' style='top:153px'>            x = y;</div>
<div class='code' style='top:170px'>        <span class='k'>return</span> x;</div>
<div class='code' style='top:187px'>    }</div>
<div class='code' style='top:204px'>    <span class='k'>public</span> <span class='k'>static</span> <span class='k'>void</span> main(String[] args) {</div>
<div class='code' style='top:221px'>        <span class='k'>int</span> m = <span class='i'>maxi</span>(8, 15);</div>
<div class='code' style='top:238px'>        System.<span class='f'>out</span>.println(m);</div>
<div class='code' style='top:255px'>    }</div>
<div class='code' style='top:272px'>}</div>
<div class='a' style='left:401px;top:170px;width:2px;height:16px;background:#000'></div>
<svg style='left:255px;top:121px' width='9' height='9' viewBox='0 0 9 9'><circle cx='4.5' cy='4.5' r='4' fill='#e6eff9' stroke='#b6c4da'/><rect x='2' y='4' width='5' height='1' fill='#6c7c9c'/></svg>
<svg style='left:255px;top:206px' width='9' height='9' viewBox='0 0 9 9'><circle cx='4.5' cy='4.5' r='4' fill='#e6eff9' stroke='#b6c4da'/><rect x='2' y='4' width='5' height='1' fill='#6c7c9c'/></svg>
<svg style='left:236px;top:137px' width='10' height='10' viewBox='0 0 10 10'><circle cx='5.5' cy='5' r='4.6' fill='#fff'/><circle cx='5.5' cy='5' r='3.2' fill='#6ea6cc' stroke='#2e6a9c'/><rect x='3.5' y='4.5' width='4' height='1' fill='#8fc0e0'/></svg>
<svg style='left:215px;top:116px' width='52' height='52' viewBox='0 0 52 52'><path d='M8 25.6 a18 18 0 1 0 36 0 a18 18 0 1 0 -36 0 Z M11 25.6 a15 15 0 1 1 30 0 a15 15 0 1 1 -30 0 Z' fill='#f00' fill-rule='evenodd'/></svg>
<div class='a chk' style='left:826px;top:101px;width:16px;height:286px'></div>
<div class='sb' style='left:826px;top:101px'></div>
<div class='a' style='left:834px;top:108px;width:1px;height:1px;background:#fff'></div>
<div class='a' style='left:833px;top:109px;width:3px;height:1px;background:#fff'></div>
<div class='a' style='left:832px;top:110px;width:5px;height:1px;background:#fff'></div>
<div class='a' style='left:831px;top:111px;width:7px;height:1px;background:#fff'></div>
<div class='a' style='left:833px;top:107px;width:1px;height:1px;background:#808080'></div>
<div class='a' style='left:832px;top:108px;width:3px;height:1px;background:#808080'></div>
<div class='a' style='left:831px;top:109px;width:5px;height:1px;background:#808080'></div>
<div class='a' style='left:830px;top:110px;width:7px;height:1px;background:#808080'></div>
<div class='sb' style='left:826px;top:371px'></div>
<div class='a' style='left:831px;top:378px;width:7px;height:1px;background:#fff'></div>
<div class='a' style='left:832px;top:379px;width:5px;height:1px;background:#fff'></div>
<div class='a' style='left:833px;top:380px;width:3px;height:1px;background:#fff'></div>
<div class='a' style='left:834px;top:381px;width:1px;height:1px;background:#fff'></div>
<div class='a' style='left:830px;top:377px;width:7px;height:1px;background:#808080'></div>
<div class='a' style='left:831px;top:378px;width:5px;height:1px;background:#808080'></div>
<div class='a' style='left:832px;top:379px;width:3px;height:1px;background:#808080'></div>
<div class='a' style='left:833px;top:380px;width:1px;height:1px;background:#808080'></div>
<div class='a chk' style='left:265px;top:387px;width:561px;height:16px'></div>
<div class='sb' style='left:265px;top:387px'></div>
<div class='a' style='left:274px;top:392px;width:1px;height:7px;background:#fff'></div>
<div class='a' style='left:273px;top:393px;width:1px;height:5px;background:#fff'></div>
<div class='a' style='left:272px;top:394px;width:1px;height:3px;background:#fff'></div>
<div class='a' style='left:271px;top:395px;width:1px;height:1px;background:#fff'></div>
<div class='a' style='left:273px;top:391px;width:1px;height:7px;background:#808080'></div>
<div class='a' style='left:272px;top:392px;width:1px;height:5px;background:#808080'></div>
<div class='a' style='left:271px;top:393px;width:1px;height:3px;background:#808080'></div>
<div class='a' style='left:270px;top:394px;width:1px;height:1px;background:#808080'></div>
<div class='sb' style='left:810px;top:387px'></div>
<div class='a' style='left:817px;top:392px;width:1px;height:7px;background:#fff'></div>
<div class='a' style='left:818px;top:393px;width:1px;height:5px;background:#fff'></div>
<div class='a' style='left:819px;top:394px;width:1px;height:3px;background:#fff'></div>
<div class='a' style='left:820px;top:395px;width:1px;height:1px;background:#fff'></div>
<div class='a' style='left:816px;top:391px;width:1px;height:7px;background:#808080'></div>
<div class='a' style='left:817px;top:392px;width:1px;height:5px;background:#808080'></div>
<div class='a' style='left:818px;top:393px;width:1px;height:3px;background:#808080'></div>
<div class='a' style='left:819px;top:394px;width:1px;height:1px;background:#808080'></div>
<div class='a' style='left:826px;top:387px;width:16px;height:16px;background:#d4d0c8'></div>
<svg style='left:237px;top:413px' width='16' height='16' viewBox='0 0 16 16'><path d="M9.500 0.500 H12.500 Q13.800 2.500 12.800 4.500 Q12 6.500 12.800 8 V12.500 Q13.500 13.500 13.500 14.500 H9.500 Z" fill="#fdfeff" stroke="#b4c4e4" stroke-width="0.800"/><rect x="0.500" y="0.500" width="9" height="14" fill="#f2fafe"/><path d="M0.500 14.500 V0.500 H9.500" fill="none" stroke="#a49458"/><path d="M0.500 14.500 H13" fill="none" stroke="#6484b8"/><path d="M1 7.500 H13 M9.500 1 V14" stroke="#a8b8d4" stroke-width="0.900"/><circle cx="5.300" cy="4.300" r="2.600" fill="#e8384c"/><path d="M5.300 9 L8 13.800 H2.600 Z" fill="#f6b838" stroke="#e09820" stroke-width="0.800"/></svg>
<div class='t' style='left:255.5px;top:416px;letter-spacing:-0.410px;'>Problems</div>
<svg style='left:308px;top:413px' width='16' height='16' viewBox='0 0 16 16'><rect x="1.700" y="1.900" width="11.700" height="8.700" rx="0.800" fill="#e6eefb" stroke="#2858ac" stroke-width="1.800"/><path d="M4 4.500 H10 M4 6.500 H7.500" stroke="#2c4c9c" stroke-width="1"/><path d="M3.200 13.500 H12" stroke="#2858ac" stroke-width="1.500"/><path d="M7.600 11.300 V13" stroke="#2858ac" stroke-width="2.600"/></svg>
<div class='t' style='left:325.9px;top:416px;letter-spacing:-0.277px;'>Console</div>
<svg style='left:373px;top:416px' width='10' height='10' viewBox='0 0 10 10'><polygon points='0.5,0.5 2.5,0.5 4.5,2.5 5.5,2.5 7.5,0.5 9.5,0.5 9.5,2.5 7.5,4.5 7.5,5.5 9.5,7.5 9.5,9.5 7.5,9.5 5.5,7.5 4.5,7.5 2.5,9.5 0.5,9.5 0.5,7.5 2.5,5.5 2.5,4.5 0.5,2.5' fill='#fff' stroke='#3c3c3c' stroke-width='1'/></svg>
<div class='a' style='left:823px;top:414px;width:10px;height:4px;border:1px solid #404040;background:#fff'></div>
<div class='a' style='left:841px;top:414px;width:10px;height:10px;border:1px solid #404040;background:#fff'></div>
<div class='a' style='left:842px;top:416px;width:8px;height:1px;background:#404040'></div>
<svg style='left:540px;top:413px' width='16' height='16' viewBox='0 0 16 16'><rect x="4.500" y="4.500" width="8" height="8" fill="#d8b4c0" stroke="#d0c0c4"/></svg>
<svg style='left:565px;top:413px' width='16' height='16' viewBox='0 0 16 16'><path d="M3.500 3.500 L12.500 12.500 M12.500 3.500 L3.500 12.500" stroke="#585858" stroke-width="2.800" stroke-linecap="round"/></svg>
<svg style='left:588px;top:413px' width='16' height='16' viewBox='0 0 16 16'><path d="M1.500 1.500 L9.500 9.500 M9.500 1.500 L1.500 9.500" stroke="#f4f4f4" stroke-width="3"/><path d="M1.500 1.500 L9.500 9.500 M9.500 1.500 L1.500 9.500" stroke="#808080" stroke-width="1" stroke-dasharray="1.200 1"/><path d="M6 6 L14 14 M14 6 L6 14" stroke="#5c5c5c" stroke-width="2.800" stroke-linecap="round"/></svg>
<div class='a' style='left:611px;top:412px;width:2px;height:18px;border-left:1px solid #808080;border-right:1px solid #fff'></div>
<svg style='left:619px;top:413px' width='16' height='16' viewBox='0 0 16 16'><path d="M1.500 0.500 H7.500 L10.500 3.500 V13.500 H1.500 Z" fill="#fffef6" stroke="#b4a060"/><path d="M3.500 4 H7.500 M3.500 6 H8.500 M3.500 8 H8.500 M3.500 10 H6.500" stroke="#6480b4"/><path d="M9 9.500 L14.500 15 M14.500 9.500 L9 15" stroke="#484848" stroke-width="2.200"/></svg>
<svg style='left:642px;top:413px' width='16' height='16' viewBox='0 0 16 16'><rect x="3.500" y="1.500" width="11" height="12" fill="#e8f0fc" stroke="#90a4c8"/><rect x="11.500" y="2" width="2.500" height="11" fill="#c8d8f0"/><rect x="11.800" y="3" width="2" height="2" fill="#2c5cb4"/><rect x="11.800" y="10" width="2" height="2" fill="#2c5cb4"/><path d="M3.500 10 V8 Q5.500 5 7.500 8 V10" fill="none" stroke="#a87810" stroke-width="1.300"/><rect x="1.500" y="9.500" width="8" height="6" fill="#f4bc28" stroke="#a87810"/><rect x="5" y="11.500" width="1.200" height="2.200" fill="#604000"/></svg>
<div class='a' style='left:664px;top:410px;width:24px;height:22px;border:1px solid;border-color:#808080 #fff #fff #808080'></div>
<div class='a chk' style='left:665px;top:411px;width:22px;height:20px'></div>
<div class='a' style='left:688px;top:410px;width:24px;height:22px;border:1px solid;border-color:#808080 #fff #fff #808080'></div>
<div class='a chk' style='left:689px;top:411px;width:22px;height:20px'></div>
<svg style='left:669px;top:414px' width='16' height='16' viewBox='0 0 16 16'><rect x="1.500" y="7.500" width="7" height="5.500" fill="#c4d8f4" stroke="#2c5cb4"/><path d="M3 15.200 H7.500 M5 13.500 V15" stroke="#2c5cb4" stroke-width="1.200"/><rect x="5.500" y="2.500" width="11" height="8" fill="#a0a0a0" opacity="0.350"/><rect x="4.500" y="1.500" width="11.500" height="8" fill="#f4f8fe" stroke="#4480d0"/><path d="M6.500 4 H12.500 M6.500 6 H13.500" stroke="#3c5cb0" stroke-width="1.100"/></svg>
<svg style='left:693px;top:414px' width='16' height='16' viewBox='0 0 16 16'><rect x="1.500" y="7.500" width="7" height="5.500" fill="#c4d8f4" stroke="#2c5cb4"/><path d="M3 15.200 H7.500 M5 13.500 V15" stroke="#2c5cb4" stroke-width="1.200"/><rect x="5.500" y="2.500" width="11" height="8" fill="#a0a0a0" opacity="0.350"/><rect x="4.500" y="1.500" width="11.500" height="8" fill="#f4f8fe" stroke="#4480d0"/><path d="M6.300 2.800 L10.300 7.600 M10.300 2.800 L6.300 7.600" stroke="#d82828" stroke-width="1.700"/><path d="M12 4 H14.500 M12 6.500 H14.500" stroke="#3c5cb0" stroke-width="1.100"/></svg>
<div class='a' style='left:715px;top:412px;width:2px;height:18px;border-left:1px solid #808080;border-right:1px solid #fff'></div>
<svg style='left:726px;top:413px' width='16' height='16' viewBox='0 0 16 16'><rect x="0.500" y="6.500" width="11" height="8" fill="#f4f8fe" stroke="#88a0d0"/><rect x="0.500" y="6" width="11" height="2.500" fill="#3f7acc"/><path d="M6.500 11 L10 6.500" stroke="#182818" stroke-width="1.200"/><path d="M9 4.500 L12.500 1 L15 3.500 L11.500 7 Z" fill="#40a848" stroke="#187020" stroke-width="0.800"/></svg>
<svg style='left:749px;top:413px' width='16' height='16' viewBox='0 0 16 16'><rect x="1.700" y="1.900" width="11.700" height="8.700" rx="0.800" fill="#dddbd7" stroke="#8c8c8c" stroke-width="1.800"/><path d="M4 4.500 H10 M4 6.500 H7.500" stroke="#8c8c8c" stroke-width="1"/><path d="M3.200 13.500 H12" stroke="#8c8c8c" stroke-width="1.500"/><path d="M7.600 11.300 V13" stroke="#8c8c8c" stroke-width="2.600"/></svg>
<div class='a' style='left:773px;top:420px;width:5px;height:1px;background:#808080'></div>
<div class='a' style='left:774px;top:421px;width:3px;height:1px;background:#808080'></div>
<div class='a' style='left:775px;top:422px;width:1px;height:1px;background:#808080'></div>
<svg style='left:786px;top:413px' width='16' height='16' viewBox='0 0 16 16'><rect x="0.5" y="3.5" width="13" height="11" fill="url(#gwin)" stroke="#a98d3c"/><rect x="0.5" y="3" width="13" height="2.6" fill="#3f7acc"/><rect x="0.5" y="3" width="13" height="1" fill="#2c62b4"/><path d="M12 7 Q11.5 13.5 4.5 14.5" fill="none" stroke="#f2cc58" stroke-width="1.2"/><path d="M11.5 0.7999999999999998 L13.0 3.0 L15.2 4.5 L13.0 6.0 L11.5 8.2 L10.0 6.0 L7.8 4.5 L10.0 3.0 Z" fill="#bf971c"/><path d="M11.5 2.0 L12.25 3.75 L14.0 4.5 L12.25 5.25 L11.5 7.0 L10.75 5.25 L9.0 4.5 L10.75 3.75 Z" fill="#fff4b4"/></svg>
<div class='a' style='left:809px;top:420px;width:5px;height:1px;background:#000'></div>
<div class='a' style='left:810px;top:421px;width:3px;height:1px;background:#000'></div>
<div class='a' style='left:811px;top:422px;width:1px;height:1px;background:#000'></div>
<div class='t' style='left:235.4px;top:436px;letter-spacing:0.098px;'>&lt;terminated&gt; C:\Program Files\Java\jdk1.6\bin\javaw.exe (30 oct. 07 18:27:07)</div>
<div class='a' style='left:234px;top:449px;width:622px;height:105px;background:#fff;border-top:1px solid #808080;border-left:1px solid #808080'></div>
<div class='a chk' style='left:839px;top:450px;width:16px;height:87px'></div>
<div class='sb' style='left:839px;top:450px'></div>
<div class='a' style='left:847px;top:457px;width:1px;height:1px;background:#fff'></div>
<div class='a' style='left:846px;top:458px;width:3px;height:1px;background:#fff'></div>
<div class='a' style='left:845px;top:459px;width:5px;height:1px;background:#fff'></div>
<div class='a' style='left:844px;top:460px;width:7px;height:1px;background:#fff'></div>
<div class='a' style='left:846px;top:456px;width:1px;height:1px;background:#808080'></div>
<div class='a' style='left:845px;top:457px;width:3px;height:1px;background:#808080'></div>
<div class='a' style='left:844px;top:458px;width:5px;height:1px;background:#808080'></div>
<div class='a' style='left:843px;top:459px;width:7px;height:1px;background:#808080'></div>
<div class='sb' style='left:839px;top:521px'></div>
<div class='a' style='left:844px;top:528px;width:7px;height:1px;background:#fff'></div>
<div class='a' style='left:845px;top:529px;width:5px;height:1px;background:#fff'></div>
<div class='a' style='left:846px;top:530px;width:3px;height:1px;background:#fff'></div>
<div class='a' style='left:847px;top:531px;width:1px;height:1px;background:#fff'></div>
<div class='a' style='left:843px;top:527px;width:7px;height:1px;background:#808080'></div>
<div class='a' style='left:844px;top:528px;width:5px;height:1px;background:#808080'></div>
<div class='a' style='left:845px;top:529px;width:3px;height:1px;background:#808080'></div>
<div class='a' style='left:846px;top:530px;width:1px;height:1px;background:#808080'></div>
<div class='a chk' style='left:235px;top:537px;width:604px;height:16px'></div>
<div class='sb' style='left:235px;top:537px'></div>
<div class='a' style='left:244px;top:542px;width:1px;height:7px;background:#fff'></div>
<div class='a' style='left:243px;top:543px;width:1px;height:5px;background:#fff'></div>
<div class='a' style='left:242px;top:544px;width:1px;height:3px;background:#fff'></div>
<div class='a' style='left:241px;top:545px;width:1px;height:1px;background:#fff'></div>
<div class='a' style='left:243px;top:541px;width:1px;height:7px;background:#808080'></div>
<div class='a' style='left:242px;top:542px;width:1px;height:5px;background:#808080'></div>
<div class='a' style='left:241px;top:543px;width:1px;height:3px;background:#808080'></div>
<div class='a' style='left:240px;top:544px;width:1px;height:1px;background:#808080'></div>
<div class='sb' style='left:823px;top:537px'></div>
<div class='a' style='left:830px;top:542px;width:1px;height:7px;background:#fff'></div>
<div class='a' style='left:831px;top:543px;width:1px;height:5px;background:#fff'></div>
<div class='a' style='left:832px;top:544px;width:1px;height:3px;background:#fff'></div>
<div class='a' style='left:833px;top:545px;width:1px;height:1px;background:#fff'></div>
<div class='a' style='left:829px;top:541px;width:1px;height:7px;background:#808080'></div>
<div class='a' style='left:830px;top:542px;width:1px;height:5px;background:#808080'></div>
<div class='a' style='left:831px;top:543px;width:1px;height:3px;background:#808080'></div>
<div class='a' style='left:832px;top:544px;width:1px;height:1px;background:#808080'></div>
<div class='a' style='left:839px;top:537px;width:16px;height:16px;background:#d4d0c8'></div>
<div class='a' style='left:235px;top:553px;width:620px;height:2px;background:#d4d0c8'></div>
<div class='a' style='left:855px;top:450px;width:1px;height:105px;background:#d4d0c8'></div>
<div class='a' style='left:10px;top:560px;width:3px;height:18px;background:#fff;border-right:1px solid #808080;border-bottom:1px solid #808080'></div>
<svg style='left:22px;top:561px' width='16' height='16' viewBox='0 0 16 16'><rect x="3.500" y="3.500" width="5" height="11" fill="url(#gwin)" stroke="#b09850" stroke-width="0.800"/><rect x="3.300" y="3" width="5.400" height="2.300" fill="#3f7acc"/><path d="M13.3 0.7999999999999998 L14.8 3.0 L17.0 4.5 L14.8 6.0 L13.3 8.2 L11.8 6.0 L9.600000000000001 4.5 L11.8 3.0 Z" fill="#bf971c"/><path d="M13.3 2.0 L14.05 3.75 L15.8 4.5 L14.05 5.25 L13.3 7.0 L12.55 5.25 L10.8 4.5 L12.55 3.75 Z" fill="#fff4b4"/></svg>
<div class='a' style='left:344px;top:557px;width:2px;height:22px;border-left:1px solid #808080;border-right:1px solid #fff'></div>
<div class='a' style='left:433px;top:557px;width:2px;height:22px;border-left:1px solid #808080;border-right:1px solid #fff'></div>
<div class='a' style='left:517px;top:557px;width:2px;height:22px;border-left:1px solid #808080;border-right:1px solid #fff'></div>
<div class='a' style='left:605px;top:557px;width:2px;height:22px;border-left:1px solid #808080;border-right:1px solid #fff'></div>
<div class='t' style='left:351.1px;top:563px;letter-spacing:0.049px;'>Writable</div>
<div class='t' style='left:439.6px;top:563px;letter-spacing:0.190px;'>Smart Insert</div>
<div class='t' style='left:523.8px;top:563px;letter-spacing:0.414px;'>5 : 18</div>
</body></html>
